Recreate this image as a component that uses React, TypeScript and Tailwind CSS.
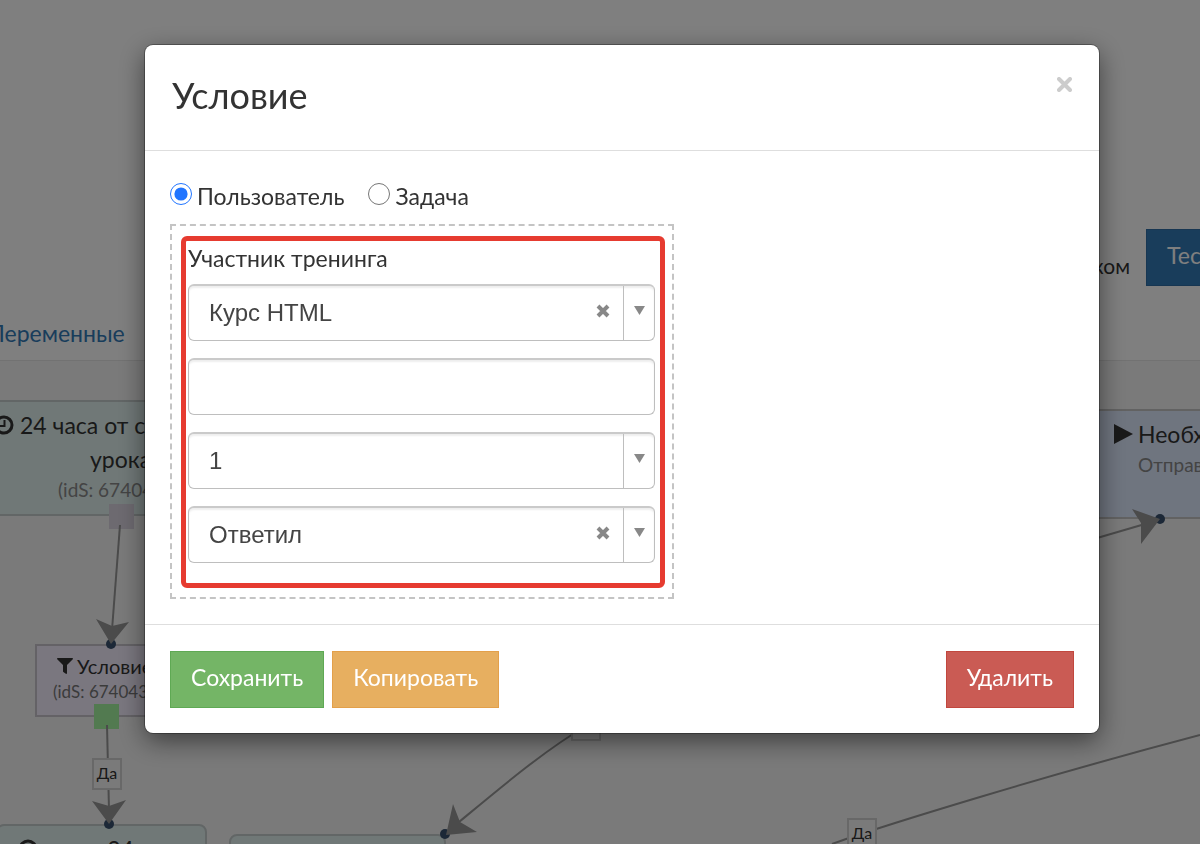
import React, { useState } from "react";
import { FaFilter } from "react-icons/fa";

const ClockIcon = () => (
  <svg className="h-5 w-5 shrink-0" viewBox="0 0 20 20" fill="none">
    <circle cx="10" cy="10" r="8" stroke="currentColor" strokeWidth="3" />
    <path d="M10.5 5v6H6" stroke="currentColor" strokeWidth="2" />
  </svg>
);

const PlayIcon = () => (
  <svg className="h-5 w-5 shrink-0" viewBox="0 0 20 20">
    <path d="M0 0L19 10L0 20Z" fill="currentColor" />
  </svg>
);

const EdgeLabel = ({ className }: { className: string }) => (
  <span
    className={`absolute h-8 w-[30px] border-2 border-[#d0d0d0] bg-[#f5f5f5] text-center text-base leading-[26px] text-[#333] ${className}`}
  >
    Да
  </span>
);

const Edges = () => (
  <svg className="absolute inset-0 h-full w-full">
    <g transform="translate(0 -361)">
      <g fill="none" stroke="#969696" strokeWidth="2">
        <path d="M120 525L112 630" />
        <path d="M107 725L109 810" />
        <path d="M586 726C545 750 500 788 459 822" />
        <path d="M1080 543L1145 524" />
        <path d="M1200 735Q1090 764 980 797T832 844" />
      </g>
      <g fill="#38506e">
        <circle cx="111" cy="644" r="5" />
        <circle cx="109" cy="824" r="5" />
        <circle cx="445" cy="834" r="5" />
        <circle cx="1160" cy="519" r="5" />
      </g>
      <g fill="#969696">
        <path d="M96 619L112 626L129 622L111 644Z" />
        <path d="M92 801L109 806L126 800L109 824Z" />
        <path d="M453 804L460 822L477 832L446 835Z" />
        <path d="M1132 509L1160 519L1141 544L1141 523Z" />
      </g>
    </g>
  </svg>
);

const ProcessPage = () => (
  <div className="flex min-h-screen flex-col overflow-hidden bg-white text-[#333]">
    <header className="flex flex-col border-b border-[#e4e4e4] pt-[229px]">
      <div className="-mr-16 flex items-center justify-end gap-4">
        <span className="pt-4 text-[21px]">Запустить с нуля списком</span>
        <button className="h-[57px] w-[118px] border border-[#2e6da4] bg-[#337ab7] px-5 pb-1 text-left text-[23px] text-white">
          Тестир.
        </button>
      </div>
      <nav className="-ml-3 flex pt-[30px] pb-[10px]">
        <a
          href="#variables"
          className="text-[23px] leading-[34px] text-[#337ab7]"
        >
          Переменные
        </a>
      </nav>
    </header>
    <main className="relative flex-1 overflow-hidden bg-[#f5f5f5]">
      <div className="absolute top-[39px] -left-8 h-[116px] w-[270px] border-2 border-[#c4cccc] bg-[#e0f0ef] pt-[6px] pl-6 whitespace-nowrap">
        <p className="flex items-center gap-[6px] text-[23px] leading-[34px]">
          <ClockIcon />
          24 часа от старта
        </p>
        <p className="pl-24 text-[23px] leading-[34px]">урока</p>
        <p className="pl-16 text-[19px] leading-7 text-[#888]">(idS: 674042)</p>
      </div>
      <div className="absolute top-[283px] left-[35px] h-[73px] w-[160px] border-2 border-[#c8c5cc] bg-[#f5efff] pt-[6px] pl-4 whitespace-nowrap">
        <p className="flex items-center gap-1 pl-1 text-xl leading-7">
          <FaFilter className="h-4 w-4" />
          Условие
        </p>
        <p className="text-[17px] leading-6 text-[#777]">(idS: 674043)</p>
      </div>
      <div className="absolute top-[463px] -left-1 h-[90px] w-[211px] rounded-lg border-2 border-[#c4cccc] bg-[#e0f0ef] pt-[6px] pl-5 whitespace-nowrap">
        <p className="flex items-center gap-1 text-[23px] leading-[34px]">
          <ClockIcon />
          через 24 часа
        </p>
      </div>
      <div className="absolute top-[473px] left-[229px] h-[90px] w-[217px] rounded-lg border-2 border-[#c4cccc] bg-[#e0f0ef]" />
      <div className="absolute top-[48px] left-[1020px] h-[110px] w-[260px] border-2 border-[#c4c4c4] bg-[#dfeaff] pt-[6px] pl-[92px] whitespace-nowrap">
        <p className="flex items-center gap-1 text-[23px] leading-[34px]">
          <PlayIcon />
          Необходимо
        </p>
        <p className="pl-6 text-[19px] leading-7 text-[#888]">Отправить</p>
      </div>
      <span className="absolute top-[143px] left-[109px] h-[25px] w-[25px] bg-[#dad4e0]" />
      <span className="absolute top-[343px] left-[94px] h-[25px] w-[25px] bg-[#a4f4a0]" />
      <Edges />
      <EdgeLabel className="top-[397px] left-[92px]" />
      <EdgeLabel className="top-[348px] left-[571px]" />
      <EdgeLabel className="top-[457px] left-[847px]" />
    </main>
  </div>
);

type ComboProps = {
  label: string;
  options: string[];
  clearable?: boolean;
};

const Combo: React.FC<ComboProps> = ({ label, options, clearable }) => {
  const [value, setValue] = useState(options[0]);

  return (
    <div className="relative flex h-[57px] rounded-md border border-t-2 border-[#bebebe] border-t-[#cacaca] bg-white shadow-[inset_0_2px_2px_rgba(0,0,0,0.07)]">
      <select
        aria-label={label}
        className="min-w-0 flex-1 appearance-none bg-transparent pl-5 font-['Liberation_Sans',sans-serif] text-2xl text-[#444] outline-none"
        value={value}
        onChange={(e) => setValue(e.target.value)}
      >
        <option value="" />
        {options.map((option) => (
          <option key={option} value={option}>
            {option}
          </option>
        ))}
      </select>
      {clearable && (
        <button
          type="button"
          aria-label="Очистить"
          className="absolute top-[18px] right-11"
          onClick={() => setValue("")}
        >
          <svg className="h-[14px] w-[14px]" viewBox="0 0 14 14">
            <path
              d="M2 2L12 12M12 2L2 12"
              stroke="#888"
              strokeWidth="4"
            />
          </svg>
        </button>
      )}
      <span className="pointer-events-none flex w-[31px] justify-center border-l border-[#bebebe] pt-5">
        <svg className="h-[9px] w-[11px]" viewBox="0 0 11 9">
          <path d="M0 0H11L5.5 9Z" fill="#888" />
        </svg>
      </span>
    </div>
  );
};

const ConditionModal = () => {
  const [subject, setSubject] = useState("user");

  return (
    <div className="fixed inset-0 overflow-y-auto bg-black/50 pt-[45px] pr-[101px] pl-[145px]">
      <div
        role="dialog"
        aria-labelledby="modal-title"
        className="rounded-lg bg-white text-[#333] shadow-[0_0_0_1px_rgba(0,0,0,0.3),0_8px_26px_rgba(0,0,0,0.5)]"
      >
        <div className="flex items-start justify-between border-b border-[#dedede] px-[27px] pt-8 pb-[31px]">
          <h1 id="modal-title" className="pb-[6px] text-4xl leading-9">
            Условие
          </h1>
          <button type="button" aria-label="Закрыть">
            <svg className="h-[15px] w-[15px]" viewBox="0 0 15 15">
              <path
                d="M2 2L13 13M13 2L2 13"
                stroke="#ccc"
                strokeWidth="4"
                strokeLinecap="round"
              />
            </svg>
          </button>
        </div>

        <div className="px-[25px] pt-7 pb-[25px]">
          <div className="flex gap-6 pb-[11px] text-[23px] leading-[34px]">
            <label className="flex gap-[5px]">
              <input
                type="radio"
                name="subject"
                className="mt-1 h-[22px] w-[22px] accent-[#2175ff]"
                checked={subject === "user"}
                onChange={() => setSubject("user")}
              />
              Пользователь
            </label>
            <label className="flex gap-[5px]">
              <input
                type="radio"
                name="subject"
                className="mt-1 h-[22px] w-[22px] accent-[#2175ff]"
                checked={subject === "task"}
                onChange={() => setSubject("task")}
              />
              Задача
            </label>
          </div>

          <div className="max-w-[504px] border-2 border-dashed border-[#c4c4c4] pt-[10px] pr-[7px] pb-[9px] pl-[9px]">
            <div className="flex flex-col gap-[17px] rounded-md border-[5px] border-[#e63b30] pr-[5px] pb-5 pl-[2px]">
              <p className="-mb-[8px] text-[23px] leading-[34px]">
                Участник тренинга
              </p>
              <Combo label="Тренинг" options={["Курс HTML"]} clearable />
              <input
                type="text"
                aria-label="Значение"
                className="h-[57px] w-full rounded-md border border-t-2 border-[#bebebe] border-t-[#cacaca] px-5 text-2xl shadow-[inset_0_2px_2px_rgba(0,0,0,0.07)] outline-none"
              />
              <Combo label="Номер" options={["1"]} />
              <Combo label="Состояние" options={["Ответил"]} clearable />
            </div>
          </div>
        </div>

        <div className="flex gap-2 border-t border-[#dedede] px-[25px] pt-[26px] pb-[25px] text-[23px] text-white">
          <button
            type="button"
            className="h-[57px] border border-[#5fa954] bg-[#74b566] px-5 pb-1"
          >
            Сохранить
          </button>
          <button
            type="button"
            className="h-[57px] border border-[#e3a04a] bg-[#e7af60] px-5 pb-1"
          >
            Копировать
          </button>
          <button
            type="button"
            className="ml-auto h-[57px] border border-[#c1473e] bg-[#ca5b54] px-5 pb-1"
          >
            Удалить
          </button>
        </div>
      </div>
    </div>
  );
};

const App: React.FC = () => {
  return (
    <div className="font-['Lato',sans-serif]">
      <ProcessPage />
      <ConditionModal />
    </div>
  );
};

export default App;
